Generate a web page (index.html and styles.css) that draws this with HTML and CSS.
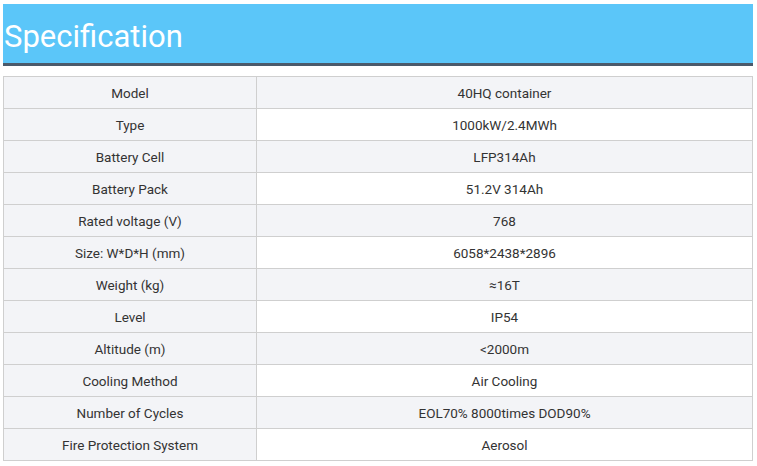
FILE: index.html
```html
<!DOCTYPE html>
<html>
<head>
<meta charset="utf-8">
<link rel="stylesheet" href="styles.css">
</head>
<body>
<div class="page">
  <h1 class="title">Specification</h1>
  <table class="spec">
    <tbody>
      <tr><td>Model</td><td>40HQ container</td></tr>
      <tr><td>Type</td><td>1000kW/2.4MWh</td></tr>
      <tr><td>Battery Cell</td><td>LFP314Ah</td></tr>
      <tr><td>Battery Pack</td><td>51.2V 314Ah</td></tr>
      <tr><td>Rated voltage (V)</td><td>768</td></tr>
      <tr><td>Size: W*D*H (mm)</td><td>6058*2438*2896</td></tr>
      <tr><td>Weight (kg)</td><td>≈16T</td></tr>
      <tr><td>Level</td><td>IP54</td></tr>
      <tr><td>Altitude (m)</td><td>&lt;2000m</td></tr>
      <tr><td>Cooling Method</td><td>Air Cooling</td></tr>
      <tr><td>Number of Cycles</td><td>EOL70% 8000times DOD90%</td></tr>
      <tr><td>Fire Protection System</td><td>Aerosol</td></tr>
    </tbody>
  </table>
</div>
</body>
</html>
```
FILE: styles.css
```css
html, body {
  margin: 0;
  padding: 0;
  background: #ffffff;
}
.page {
  padding: 4px 4px 0 3px;
  font-family: Roboto, "Liberation Sans", Arial, sans-serif;
}
.title {
  margin: 0;
  height: 52px;
  padding-top: 7px;
  line-height: 52px;
  background: #5bc6f9;
  border-bottom: 3px solid #4b5a6b;
  color: #ffffff;
  font-size: 31px;
  font-weight: 400;
  padding-left: 1px;
}
.spec {
  margin-top: 10px;
  width: 100%;
  border-collapse: collapse;
  font-size: 13.5px;
  color: #333333;
}
.spec td {
  height: 31px;
  padding: 0;
  border: 1px solid #cfcfcf;
  text-align: center;
  vertical-align: middle;
  background: #ffffff;
}
.spec td:first-child {
  width: 252px;
  background: #f3f4f7;
}
.spec tr:nth-child(odd) td {
  background: #f3f4f7;
}
```
